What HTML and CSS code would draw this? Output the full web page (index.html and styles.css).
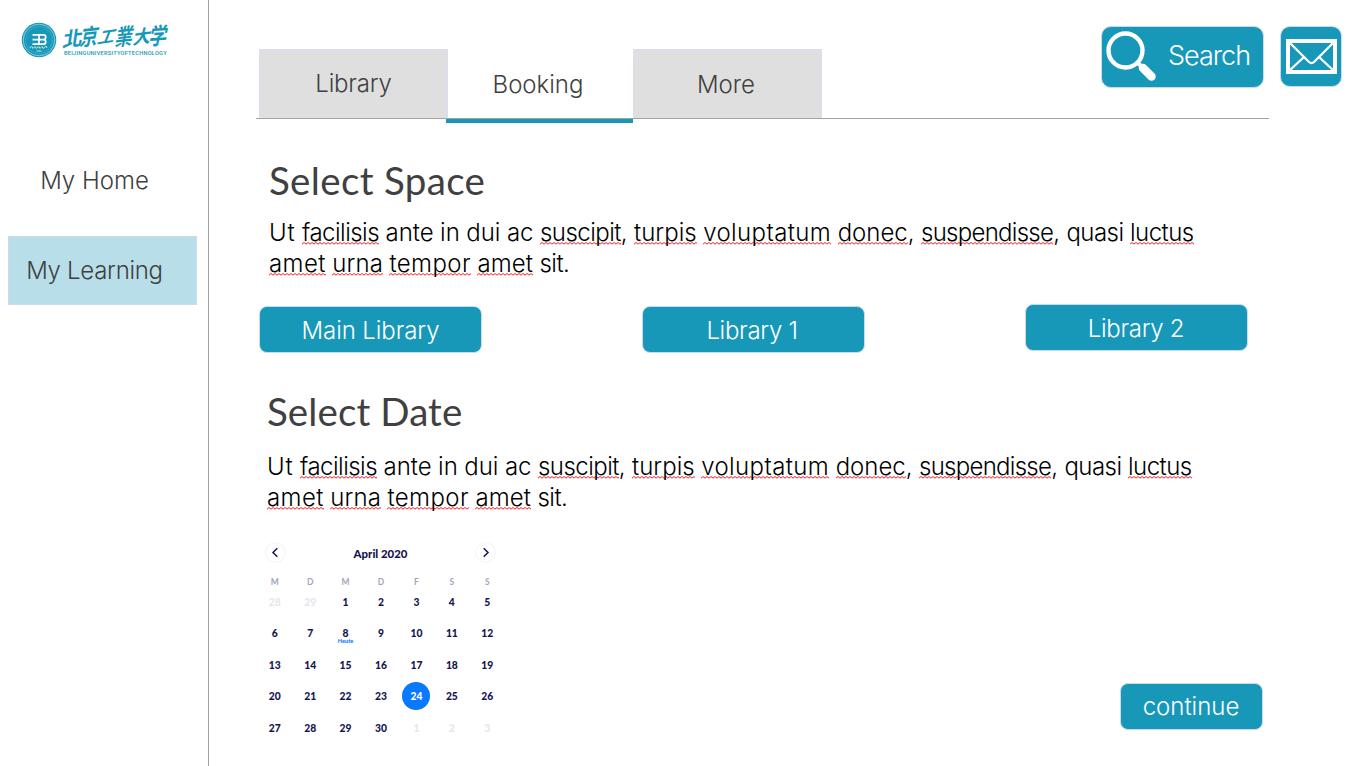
FILE: index.html
```html
<!DOCTYPE html>
<html lang="en">
<head>
<meta charset="utf-8">
<title>Booking</title>
<link rel="stylesheet" href="styles.css">
</head>
<body>
<div class="app">
  <aside class="sidebar">
    <div class="brand">
      <svg class="seal" viewBox="0 0 36 36" aria-hidden="true">
        <circle cx="18" cy="18" r="17.3" fill="#1898b9"/>
        <circle cx="18" cy="18" r="15.8" fill="none" stroke="#b9e0ea" stroke-width=".7"/>
        <circle cx="18" cy="18" r="13.4" fill="none" stroke="#4fb1cb" stroke-width="1.2" stroke-dasharray="1 1"/>
        <path d="M11.500 12.900H22.500q2.200 0 2.200 2.300T22.500 17.500H14.500M11.500 17.600H22.500q2.200 0 2.200 2.300T22.500 22.200H11.500M18 12.900V22.200" fill="none" stroke="#fff" stroke-width="1.700"/>
        <path d="M8.500 25.500l2.500-1 1 2 2-2 1 2 3-2 1 2 2-2 1 2 3-2.500 1 2M15.500 29h5" fill="none" stroke="#b9e0ea" stroke-width="1"/>
      </svg>
      <div class="brand-text">
        <div class="brand-cn"><span class="c1">北</span><span class="c2">京</span><span class="c3">工</span><span class="c4">業</span><span class="c5">大</span><span class="c6">学</span></div>
        <div class="brand-en">BEIJINGUNIVERSITYOFTECHNOLOGY</div>
      </div>
    </div>
    <nav class="side-nav">
      <a class="side-item">My Home</a>
      <a class="side-item active">My Learning</a>
    </nav>
  </aside>
  <main class="main">
    <header class="topbar">
      <nav class="tabs">
        <a class="tab first">Library</a>
        <a class="tab current">Booking</a>
        <a class="tab more">More</a>
      </nav>
      <div class="actions">
        <button class="btn search">
          <svg class="glass" viewBox="0 0 52 54" aria-hidden="true">
            <circle cx="20.500" cy="20.500" r="17" fill="none" stroke="#fff" stroke-width="4.400"/>
            <path d="M32 32l6 6" stroke="#fff" stroke-width="4"/>
            <path d="M38 38l8.500 8.500" stroke="#fff" stroke-width="8.500" stroke-linecap="round"/>
          </svg>
          <span>Search</span>
        </button>
        <button class="btn mail" aria-label="Mail">
          <svg class="envelope" viewBox="0 0 51 35" aria-hidden="true">
            <rect x="2" y="2" width="47" height="31" fill="none" stroke="#fff" stroke-width="4"/>
            <path d="M3 3l20 20q2.500 2.200 5 0L48 3M3 32l15-14M48 32L33 18" fill="none" stroke="#fff" stroke-width="2.300"/>
          </svg>
        </button>
      </div>
    </header>
    <section class="space">
      <h1>Select Space</h1>
      <p><span class="wider">Ut</span> <u class="tight">facilisis</u> ante in dui ac <u class="tight">suscipit</u>, <u>turpis</u> <u class="wide">voluptatum</u> <u>donec</u>, <u class="tighter">suspendisse</u>, <span class="tight">quasi</span> <u class="tight">luctus</u><br><u class="wide">amet</u> <u class="even">urna</u> <u class="wide">tempor</u> <u class="even">amet</u> <span class="tight">sit.</span></p>
      <div class="choices">
        <button class="btn choice">Main Library</button>
        <button class="btn choice numbered">Library 1</button>
        <button class="btn choice numbered raised">Library 2</button>
      </div>
    </section>
    <section class="date">
      <h1>Select Date</h1>
      <p><span class="wider">Ut</span> <u class="tight">facilisis</u> ante in dui ac <u class="tight">suscipit</u>, <u>turpis</u> <u class="wide">voluptatum</u> <u>donec</u>, <u class="tighter">suspendisse</u>, <span class="tight">quasi</span> <u class="tight">luctus</u><br><u class="wide">amet</u> <u class="even">urna</u> <u class="wide">tempor</u> <u class="even">amet</u> <span class="tight">sit.</span></p>
    </section>
    <div class="bottom">
      <div class="calendar">
        <div class="cal-head">
          <svg class="arrow" viewBox="0 0 21 21" aria-hidden="true"><circle cx="10.500" cy="10.500" r="9.800" fill="#fff" stroke="#f3f3f7"/><path d="M12.300 6.200L8 10.500l4.300 4.300" fill="none" stroke="#14144f" stroke-width="1.500"/></svg>
          <strong>April 2020</strong>
          <svg class="arrow" viewBox="0 0 21 21" aria-hidden="true"><circle cx="10.500" cy="10.500" r="9.800" fill="#fff" stroke="#f3f3f7"/><path d="M8.700 6.200l4.300 4.300-4.300 4.300" fill="none" stroke="#14144f" stroke-width="1.500"/></svg>
        </div>
        <div class="week names"><span>M</span><span>D</span><span>M</span><span>D</span><span>F</span><span>S</span><span>S</span></div>
        <div class="week"><span class="off">28</span><span class="off">29</span><span>1</span><span>2</span><span>3</span><span>4</span><span>5</span></div>
        <div class="week"><span>6</span><span>7</span><span class="today">8<small>Heute</small></span><span>9</span><span>10</span><span>11</span><span>12</span></div>
        <div class="week"><span>13</span><span>14</span><span>15</span><span>16</span><span>17</span><span>18</span><span>19</span></div>
        <div class="week"><span>20</span><span>21</span><span>22</span><span>23</span><span><b class="picked">24</b></span><span>25</span><span>26</span></div>
        <div class="week"><span>27</span><span>28</span><span>29</span><span>30</span><span class="off">1</span><span class="off">2</span><span class="off">3</span></div>
      </div>
      <button class="btn continue">continue</button>
    </div>
  </main>
</div>
</body>
</html>
```
FILE: styles.css
```css
* { box-sizing: border-box; }
body { margin: 0; background: #fff; color: #404040; font-family: Inter, "Liberation Sans", sans-serif; font-weight: 300; font-size: 24px; overflow: hidden; }
.app { display: flex; width: 1362px; height: 766px; }
.sidebar { width: 209px; flex: none; border-right: 1px solid #a3a3a3; padding-top: 22px; }
.main { flex: 1; min-width: 0; display: flex; flex-direction: column; }

.brand { display: flex; gap: 4px; padding-left: 21px; height: 36px; color: #1898b9; }
.seal { width: 36px; height: 36px; flex: none; }
.brand-cn { display: flex; height: 26px; line-height: 26px; font-family: "Noto Sans CJK TC", "Noto Sans CJK SC", sans-serif; font-weight: 700; font-size: 20px; padding-left: 2px; }
.brand-cn span { display: block; width: 17.400px; }
.brand-cn .c1 { transform: translateY(3px) rotate(-6deg) skewX(-14deg) scale(1, 1); }
.brand-cn .c2 { transform: translateY(1px) rotate(-6deg) skewX(-18deg) scale(.9, 1.100); }
.brand-cn .c3 { transform: translateY(1px) rotate(-8deg) skewX(-30deg) scale(.85, .8); }
.brand-cn .c4 { transform: translateY(1px) rotate(-6deg) skewX(-18deg) scale(.9, 1.100); }
.brand-cn .c5 { transform: translateY(1px) rotate(-8deg) skewX(-20deg) scale(.9, .9); }
.brand-cn .c6 { transform: translate(-1px, 0) rotate(-4deg) skewX(-14deg) scale(.9, 1.150); }
.brand-en { font-family: Roboto, sans-serif; font-weight: 500; font-size: 5.700px; line-height: 7px; margin-top: 2px; padding-left: 3px; letter-spacing: .22px; white-space: nowrap; }

.side-nav { display: flex; flex-direction: column; gap: 21px; padding: 88px 0 0 8px; }
.side-item { display: flex; align-items: center; justify-content: center; width: 189px; height: 69px; padding-right: 16px; border: 1px solid transparent; white-space: nowrap; }
.side-item.active { background: #b8dfe9; border-color: #ccdcf0; letter-spacing: -.3px; }

.topbar { display: flex; justify-content: space-between; height: 123px; padding-left: 47px; padding-right: 20px; }
.tabs { display: flex; width: 1013px; height: 70px; margin-top: 49px; padding-left: 3px; border-bottom: 1px solid #a3a3a3; flex: none; margin-right: -168px; }
.tab { flex: none; display: flex; align-items: center; justify-content: center; width: 189px; height: 69px; background: #dfdfdf; border: 1px solid #d8dff0; border-bottom: 0; }
.tab.first { padding-bottom: 2px; letter-spacing: -.2px; }
.tab.more { padding-right: 3px; }
.tab.current { width: 187px; height: 74px; margin-left: -2px; padding-right: 3px; background: none; border: 0; border-bottom: 4px solid #1898b9; }
.actions { display: flex; gap: 16px; padding-top: 26px; margin-right: 0; }

.btn { display: flex; align-items: center; justify-content: center; padding: 0; color: #fff; background: #1898b9; border: 1px solid #c9daf0; border-radius: 8px; font: inherit; white-space: nowrap; }
.search { width: 163px; height: 62px; border-radius: 10px; font-size: 27px; letter-spacing: -1px; justify-content: flex-start; padding-left: 3px; }
.search span { margin-top: -3px; }
.glass { width: 52px; height: 54px; margin-right: 11px; }
.mail { width: 62px; height: 61px; border-radius: 10px; margin-right: 1px; }
.envelope { width: 51px; height: 35px; }

h1 { margin: 0; font-family: Lato, sans-serif; font-weight: 400; font-size: 38.500px; letter-spacing: .35px; line-height: 44px; height: 46px; white-space: nowrap; }
p { margin: 0; color: #000; line-height: 31px; white-space: nowrap; word-spacing: -.3px; }
u { text-decoration: none; background: url("data:image/svg+xml,%3Csvg xmlns='http://www.w3.org/2000/svg' width='4' height='3'%3E%3Cpath d='M-1 3L2 .5L5 3' fill='none' stroke='%23f00' stroke-width='.9'/%3E%3C/svg%3E") repeat-x 0 24px; }
.tight { letter-spacing: -.53px; }
.tighter { letter-spacing: -.72px; }
.even { letter-spacing: .1px; }
.wide { letter-spacing: .4px; }
.wider { letter-spacing: .9px; }
.space { padding: 35px 0 0 60px; }
.space p { margin-top: 13px; }
.choices { display: flex; gap: 160px; margin: 27px 0 0 -10px; }
.choice { width: 223px; height: 47px; padding-top: 2px; letter-spacing: -.1px; }
.numbered { letter-spacing: -.3px; padding-right: 3px; }
.raised { margin-top: -2px; padding-right: 1px; }
.date { padding: 37px 0 0 58px; }
.date h1 { letter-spacing: .1px; line-height: 43px; }
.date p { margin-top: 15px; }

.bottom { display: flex; justify-content: space-between; align-items: flex-start; padding: 29px 99px 0 48px; }
.continue { width: 143px; height: 47px; margin-top: 141px; padding-right: 1px; }

.calendar { width: 248px; color: #14144f; font-family: Lato, sans-serif; font-weight: 900; font-size: 10.300px; }
.cal-head { display: flex; align-items: center; justify-content: space-between; height: 21px; padding: 0 9px 0 8px; font-size: 11.400px; }
.cal-head strong { font-weight: 900; padding-top: 1px; }
.arrow { width: 21px; height: 21px; }
.week { display: grid; grid-template-columns: repeat(7, 1fr); height: 31.400px; align-items: center; text-align: center; }
.week > span { display: grid; justify-items: center; line-height: 12px; }
.names { height: 24px; color: #a3a5bd; font-size: 8.500px; margin: 7px 0 -7.700px; font-weight: 700; }
.off { color: #e6e6ee; }
.today { position: relative; }
.today small { position: absolute; top: 10px; font-size: 5.600px; line-height: 8px; color: #0a78ff; }
.picked { display: grid; place-items: center; width: 28px; height: 28px; border-radius: 50%; background: #0a78ff; color: #fff; font-weight: 900; }
```
